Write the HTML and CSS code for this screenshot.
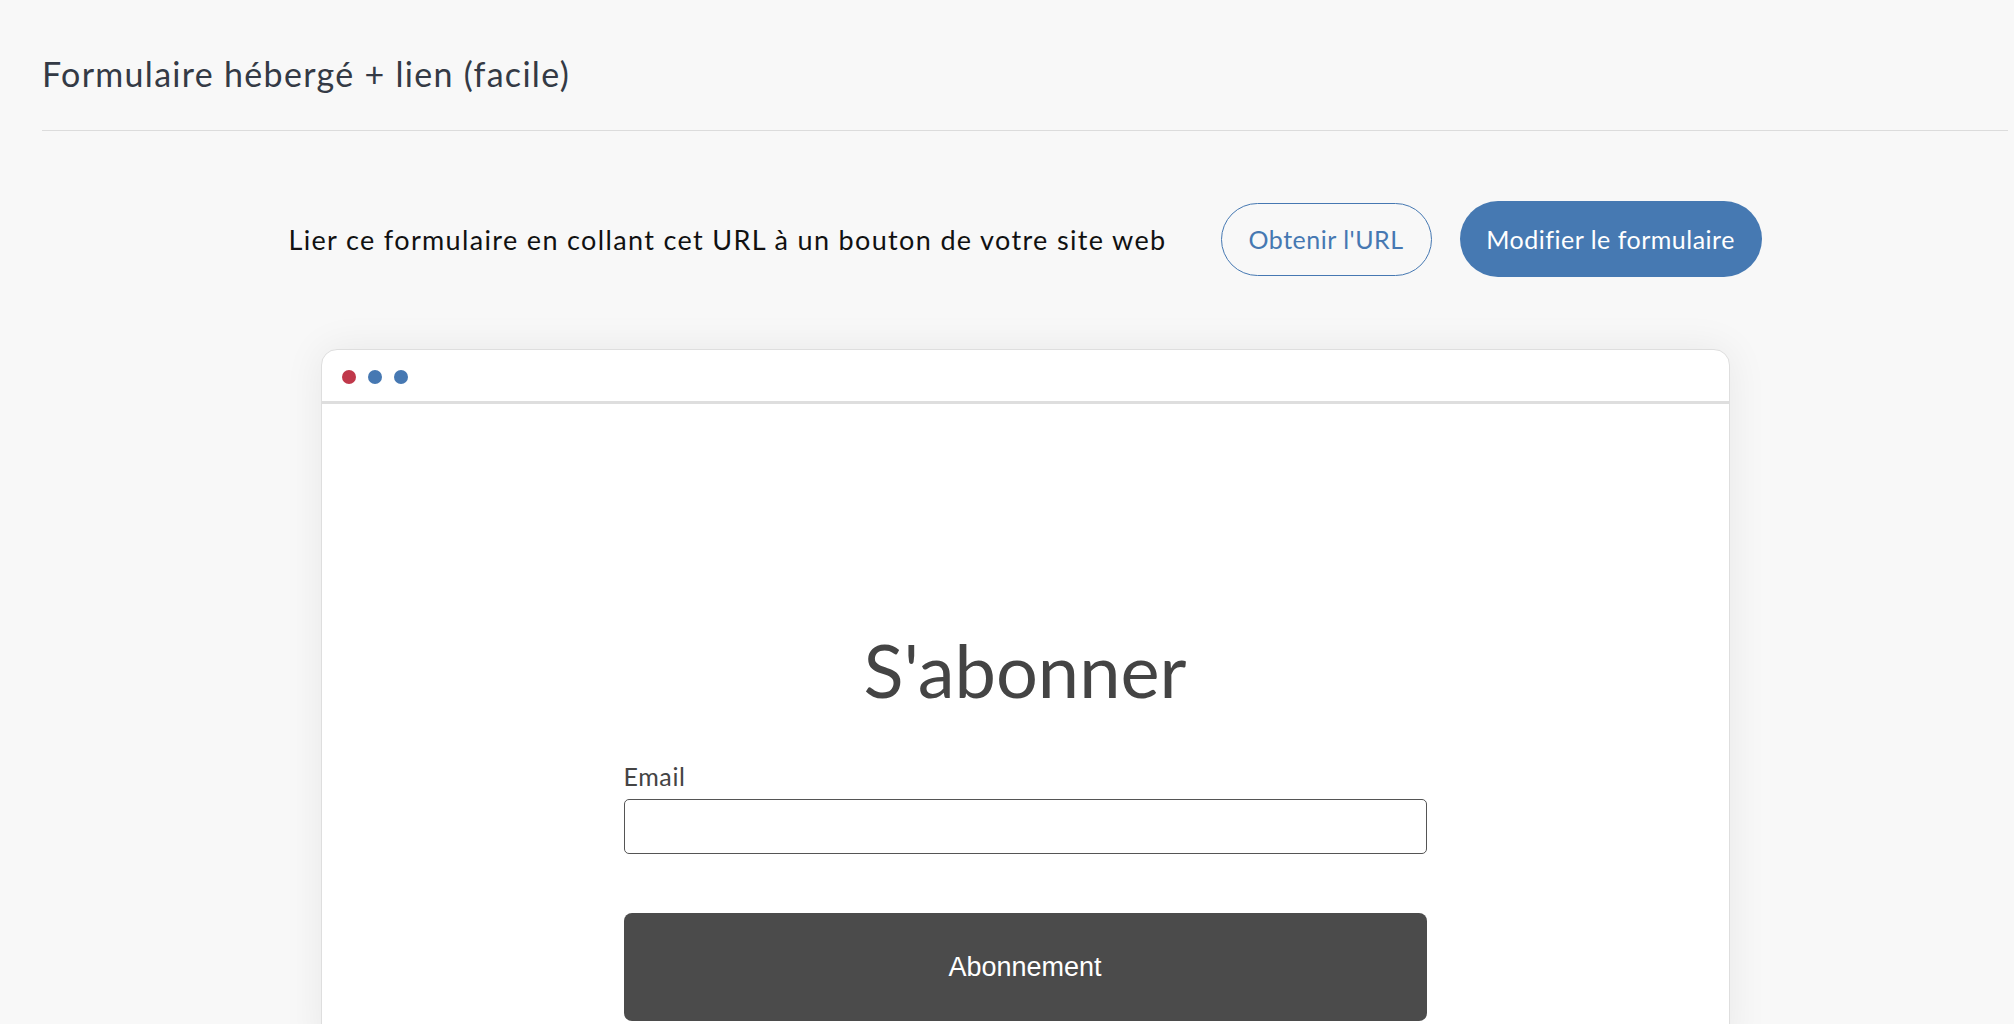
FILE: index.html
```html
<!DOCTYPE html>
<html lang="fr">
<head>
<meta charset="utf-8">
<title>Formulaire hébergé + lien</title>
<link rel="stylesheet" href="styles.css">
</head>
<body>
<div class="page">
  <h1 class="title">Formulaire hébergé + lien (facile)</h1>
  <hr class="divider">
  <div class="actions">
    <p class="hint">Lier ce formulaire en collant cet URL à un bouton de votre site web</p>
    <button class="btn btn-outline">Obtenir l'URL</button>
    <button class="btn btn-fill">Modifier le formulaire</button>
  </div>
  <div class="card">
    <div class="card-bar">
      <span class="dot dot-red"></span>
      <span class="dot dot-blue"></span>
      <span class="dot dot-blue"></span>
    </div>
    <div class="card-body">
      <form class="form">
        <h2 class="form-title">S'abonner</h2>
        <label class="label" for="email">Email</label>
        <input class="input" id="email" type="email">
        <button class="submit" type="button">Abonnement</button>
      </form>
    </div>
  </div>
</div>
</body>
</html>
```

FILE: styles.css
```css
html, body {
  margin: 0;
  padding: 0;
  background: #f8f8f8;
  overflow: hidden;
}
body {
  font-family: Lato, "Noto Sans", sans-serif;
  color: #2f3640;
}
.page {
  padding: 0 6px 0 42px;
}
.title {
  margin: 0;
  padding-top: 55px;
  font-size: 34px;
  line-height: 38px;
  letter-spacing: 1.3px;
  font-weight: 400;
  color: #343a45;
}
.divider {
  margin: 37px 0 0;
  border: 0;
  border-top: 1px solid #dcdcdc;
  height: 0;
}
.actions {
  display: flex;
  justify-content: center;
  align-items: center;
  margin-top: 70px;
}
.hint {
  margin: 0 54px 0 0;
  font-size: 27px;
  letter-spacing: 1.35px;
  color: #111;
}
.btn {
  font-family: Lato, "Noto Sans", sans-serif;
  font-size: 25px;
  letter-spacing: 0.5px;
  border-radius: 40px;
  cursor: pointer;
  padding: 0;
}
.btn-outline {
  width: 211px;
  height: 73px;
  background: transparent;
  border: 1px solid #4678b2;
  color: #4678b2;
  margin-right: 28px;
}
.btn-fill {
  width: 302px;
  height: 76px;
  background: #4679b2;
  border: 0;
  color: #fff;
}
.card {
  width: 1409px;
  box-sizing: border-box;
  margin: 72px auto 0;
  background: #fff;
  border: 1px solid #dedede;
  border-radius: 16px 16px 0 0;
  box-shadow: 0 0 40px rgba(0, 0, 0, 0.07);
  height: 700px;
}
.card-bar {
  height: 49px;
  padding-top: 2px;
  display: flex;
  align-items: center;
  gap: 12px;
  padding-left: 20px;
  border-bottom: 3px solid #dedede;
}
.dot {
  width: 14px;
  height: 14px;
  border-radius: 50%;
  background: #4678b2;
}
.dot-red {
  background: #c0384a;
}
.card-body {
  padding-top: 220px;
}
.form {
  width: 803px;
  margin: 0 auto;
  display: flex;
  flex-direction: column;
}
.form-title {
  margin: 0;
  text-align: center;
  font-size: 74px;
  line-height: 91px;
  font-weight: 400;
  color: #444;
}
.label {
  margin-top: 47px;
  font-size: 25px;
  letter-spacing: 0.6px;
  line-height: 29px;
  color: #444;
}
.input {
  margin-top: 8px;
  height: 55px;
  box-sizing: border-box;
  border: 1px solid #555;
  border-radius: 5px;
  background: #fff;
}
.submit {
  margin-top: 59px;
  height: 108px;
  border: 0;
  border-radius: 8px;
  background: #4b4b4b;
  color: #fff;
  font-family: "Liberation Sans", Arial, sans-serif;
  font-size: 27px;
}
```
